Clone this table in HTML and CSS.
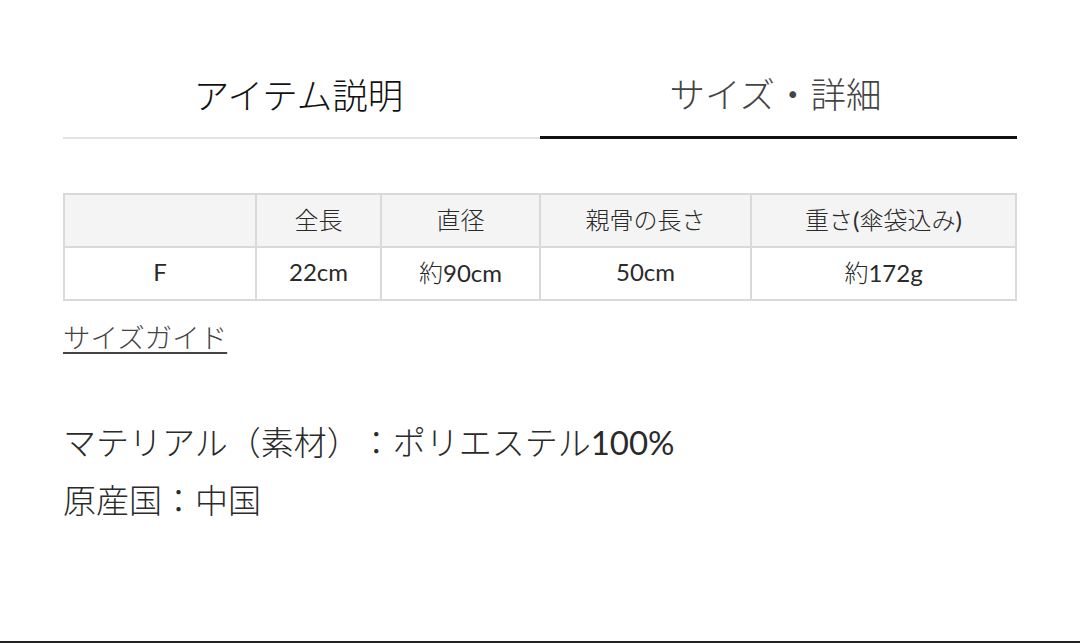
FILE: index.html
```html
<!DOCTYPE html>
<html lang="ja">
<head>
<meta charset="utf-8">
<link rel="stylesheet" href="styles.css">
</head>
<body>
<div class="page">
  <div class="tabs">
    <div class="tab">アイテム説明</div>
    <div class="tab active">サイズ・詳細</div>
  </div>
  <table class="size-table">
    <tr class="head">
      <th></th>
      <th>全長</th>
      <th>直径</th>
      <th>親骨の長さ</th>
      <th>重さ<span class="lat">(</span>傘袋込み<span class="lat">)</span></th>
    </tr>
    <tr>
      <td><span class="lat">F</span></td>
      <td><span class="lat">22cm</span></td>
      <td>約<span class="lat">90cm</span></td>
      <td><span class="lat">50cm</span></td>
      <td>約<span class="lat">172g</span></td>
    </tr>
  </table>
  <a class="guide">サイズガイド</a>
  <div class="details">
    <p>マテリアル（素材）：ポリエステル<span class="lat">100%</span></p>
    <p>原産国：中国</p>
  </div>
</div>
<div class="bottom-bar"></div>
</body>
</html>
```
FILE: styles.css
```css
html, body {
  margin: 0;
  padding: 0;
  background: #fff;
}
body {
  width: 1080px;
  height: 643px;
  position: relative;
  overflow: hidden;
  font-family: Lato, "Noto Sans CJK JP", sans-serif;
  font-weight: 300;
  color: #333;
  text-spacing-trim: space-all;
}
.lat {
  font-weight: 400;
}
.page {
  padding: 0 63px;
}
.tabs {
  display: flex;
  width: 954px;
  padding-top: 66px;
  align-items: flex-end;
}
.tab {
  flex: 1;
  text-align: center;
  font-size: 35.5px;
  line-height: 58px;
  height: 58px;
  padding-bottom: 12px;
  padding-right: 6px;
  color: #111;
  border-bottom: 2px solid #e2e2e2;
  margin-bottom: 5px;
}
.tab.active {
  color: #444;
  border-bottom: 3px solid #111;
}
.size-table {
  margin-top: 49px;
  width: 954px;
  border-collapse: collapse;
  border: 2px solid #d9d9d9;
  table-layout: fixed;
}
.size-table th, .size-table td {
  border: 2px solid #d9d9d9;
  height: 53px;
  padding: 0 0 4px;
  box-sizing: border-box;
  text-align: center;
  font-size: 24px;
  font-weight: 300;
  color: #2a2a2a;
}
.size-table th:nth-child(1) { width: 192px; }
.size-table th:nth-child(2) { width: 125px; }
.size-table th:nth-child(3) { width: 159px; }
.size-table th:nth-child(4) { width: 211px; }
.head th {
  background: #f4f4f4;
}
.guide {
  display: inline-block;
  margin-top: 19px;
  font-size: 27.5px;
  line-height: 36px;
  color: #444;
  text-decoration: underline;
  text-underline-offset: 4px;
  text-decoration-thickness: 2px;
}
.details {
  margin-top: 57px;
}
.details p {
  margin: 0;
  font-size: 33px;
  line-height: 58px;
  color: #2a2a2a;
}
.bottom-bar {
  position: absolute;
  left: 0;
  right: 0;
  bottom: 0;
  height: 2px;
  background: #222;
}
```
